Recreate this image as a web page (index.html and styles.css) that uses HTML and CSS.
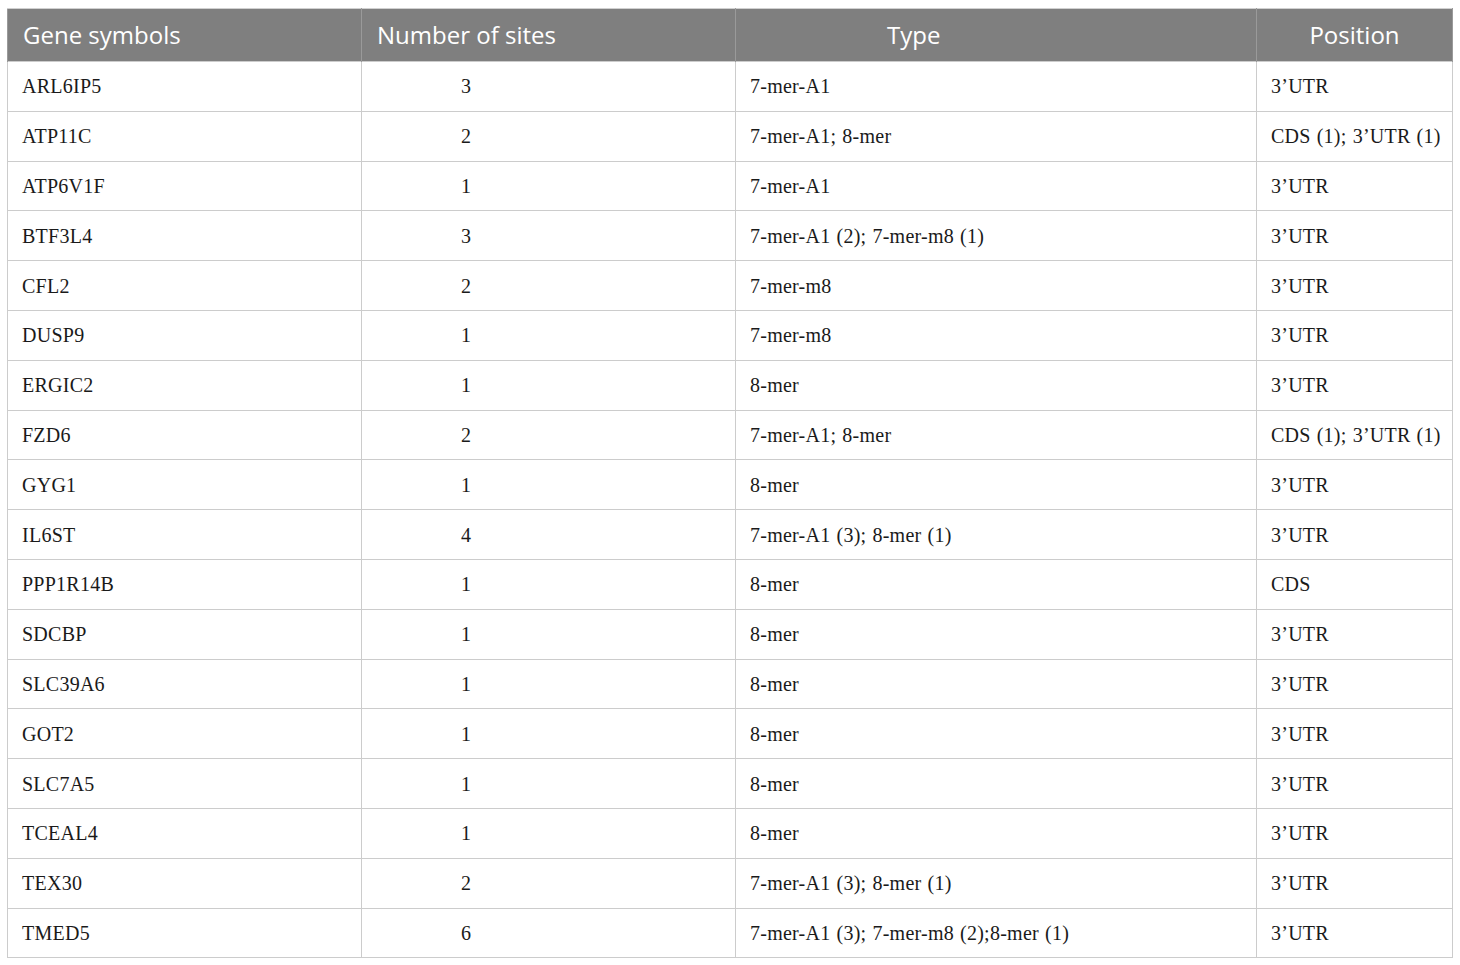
FILE: index.html
```html
<!DOCTYPE html>
<html>
<head>
<meta charset="utf-8">
<link rel="stylesheet" href="styles.css">
</head>
<body>
<table class="data">
  <colgroup>
    <col class="c1"><col class="c2"><col class="c3"><col class="c4">
  </colgroup>
  <thead>
    <tr>
      <th class="h-gene">Gene symbols</th>
      <th class="h-num">Number of sites</th>
      <th class="h-type">Type</th>
      <th class="h-pos">Position</th>
    </tr>
  </thead>
  <tbody>
    <tr><td>ARL6IP5</td><td class="num">3</td><td>7-mer-A1</td><td>3’UTR</td></tr>
    <tr><td>ATP11C</td><td class="num">2</td><td>7-mer-A1; 8-mer</td><td>CDS (1); 3’UTR (1)</td></tr>
    <tr><td>ATP6V1F</td><td class="num">1</td><td>7-mer-A1</td><td>3’UTR</td></tr>
    <tr><td>BTF3L4</td><td class="num">3</td><td>7-mer-A1 (2); 7-mer-m8 (1)</td><td>3’UTR</td></tr>
    <tr><td>CFL2</td><td class="num">2</td><td>7-mer-m8</td><td>3’UTR</td></tr>
    <tr><td>DUSP9</td><td class="num">1</td><td>7-mer-m8</td><td>3’UTR</td></tr>
    <tr><td>ERGIC2</td><td class="num">1</td><td>8-mer</td><td>3’UTR</td></tr>
    <tr><td>FZD6</td><td class="num">2</td><td>7-mer-A1; 8-mer</td><td>CDS (1); 3’UTR (1)</td></tr>
    <tr><td>GYG1</td><td class="num">1</td><td>8-mer</td><td>3’UTR</td></tr>
    <tr><td>IL6ST</td><td class="num">4</td><td>7-mer-A1 (3); 8-mer (1)</td><td>3’UTR</td></tr>
    <tr><td>PPP1R14B</td><td class="num">1</td><td>8-mer</td><td>CDS</td></tr>
    <tr><td>SDCBP</td><td class="num">1</td><td>8-mer</td><td>3’UTR</td></tr>
    <tr><td>SLC39A6</td><td class="num">1</td><td>8-mer</td><td>3’UTR</td></tr>
    <tr><td>GOT2</td><td class="num">1</td><td>8-mer</td><td>3’UTR</td></tr>
    <tr><td>SLC7A5</td><td class="num">1</td><td>8-mer</td><td>3’UTR</td></tr>
    <tr><td>TCEAL4</td><td class="num">1</td><td>8-mer</td><td>3’UTR</td></tr>
    <tr><td>TEX30</td><td class="num">2</td><td>7-mer-A1 (3); 8-mer (1)</td><td>3’UTR</td></tr>
    <tr><td>TMED5</td><td class="num">6</td><td>7-mer-A1 (3); 7-mer-m8 (2);8-mer (1)</td><td>3’UTR</td></tr>
  </tbody>
</table>
</body>
</html>
```
FILE: styles.css
```css
html, body {
  margin: 0;
  padding: 0;
  background: #ffffff;
}

.data {
  margin: 8px 0 0 7px;
  width: 1445px;
  border-collapse: collapse;
  table-layout: fixed;
}

.c1 { width: 354px; }
.c2 { width: 374px; }
.c3 { width: 521px; }
.c4 { width: 196px; }

.data th {
  background: #7f7f7f;
  color: #ffffff;
  font-family: "Open Sans", "Noto Sans", sans-serif;
  font-weight: normal;
  font-size: 24px;
  height: 52px;
  padding: 0 0 0 15px;
  text-align: left;
  border-left: 1px solid #9a9a9a;
  border-right: 1px solid #9a9a9a;
  border-top: 1px solid #d0d0d0;
  vertical-align: middle;
  line-height: 1;
}

.data th.h-type {
  padding-left: 151px;
}

.data th.h-pos {
  padding-left: 0;
  text-align: center;
}

.data tbody tr {
  height: 49.8px;
}

.data td {
  font-family: "Liberation Serif", "Times New Roman", serif;
  font-size: 20px;
  letter-spacing: 0.25px;
  word-spacing: 0.8px;
  color: #1a1a1a;
  padding: 0 0 0 14px;
  border: 1.5px solid #cccccc;
  vertical-align: middle;
  white-space: nowrap;
  line-height: 1;
}

.data td.num {
  padding-left: 99px;
}
```
